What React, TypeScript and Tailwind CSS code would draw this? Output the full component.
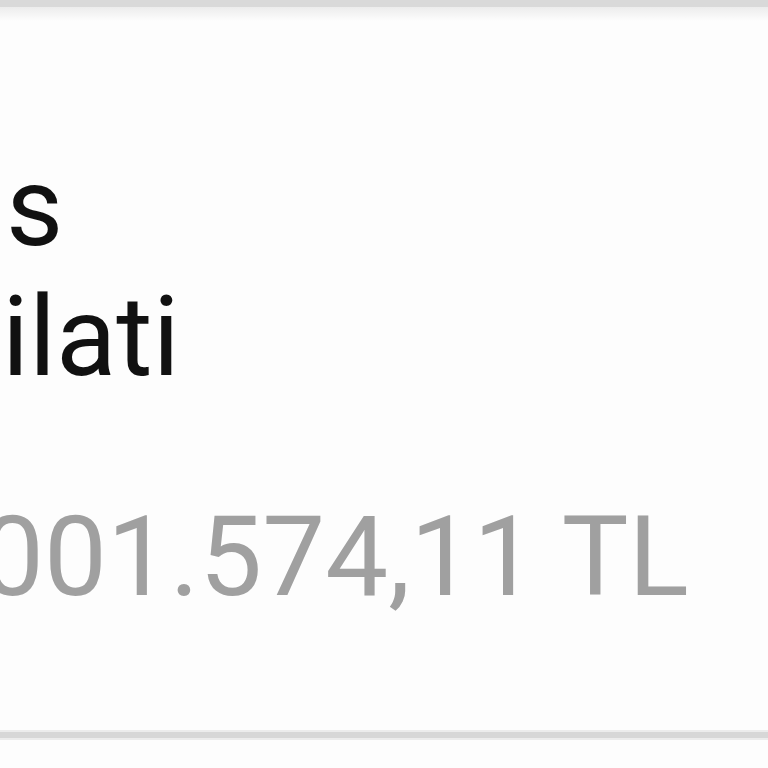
export default function App() {
  return (
    <div
      className="w-[768px] h-[768px] overflow-hidden bg-[#fdfdfd] flex flex-col"
      style={{ fontFamily: 'Roboto, "Noto Sans", sans-serif' }}
    >
      <div className="h-[7px] bg-[#d9d9d9] shrink-0" />
      <div className="h-[14px] bg-gradient-to-b from-[#ececec] to-[#fdfdfd] shrink-0" />

      <div className="pt-[121px] whitespace-nowrap">
        <div className="text-[111px] leading-[130px] text-[#111111] ml-[6px]">s</div>
        <div className="text-[111px] leading-[130px] text-[#111111] ml-[2px]">ilati</div>
        <div className="mt-[90px] text-[112px] leading-[130px] text-[#a0a0a0] -ml-[19px]">
          001.574,11 TL
        </div>
      </div>

      <div className="flex-1" />
      <div className="h-[2px] bg-[#ececec] shrink-0" />
      <div className="h-[6px] bg-[#d7d7d7] shrink-0" />
      <div className="h-[2px] bg-[#ececec] shrink-0" />
      <div className="h-[28px] shrink-0" />
    </div>
  );
}
